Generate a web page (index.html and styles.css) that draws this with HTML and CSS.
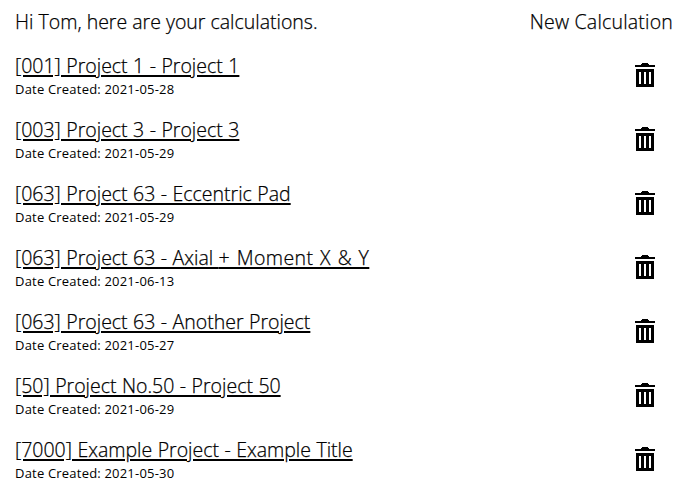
FILE: index.html
```html
<!DOCTYPE html>
<html lang="en">
<head>
  <meta charset="UTF-8">
  <meta name="viewport" content="width=device-width, initial-scale=1.0">
  <title>Calculations</title>
  <link rel="stylesheet" href="styles.css">
</head>
<body>
  <svg class="sprite">
    <symbol id="trash" viewBox="0 0 20 24">
      <path d="M6 2V1h1V0h6v1h1v1h6v2H0V2z"/>
      <path fill-rule="evenodd" d="M1 6h18v18H1zM4 9v12h2V9zM9 9v12h2V9zM14 9v12h2V9z"/>
    </symbol>
  </svg>

  <header class="header">
    <span class="greeting">Hi Tom, here are your calculations.</span>
    <a class="new-calc" href="#">New Calculation</a>
  </header>

  <ul class="calc-list">
    <li class="calc">
      <div class="info">
        <a class="title" href="#">[001] Project 1 - Project 1</a>
        <span class="date">Date Created: 2021-05-28</span>
      </div>
      <button class="delete" aria-label="Delete"><svg><use href="#trash"/></svg></button>
    </li>
    <li class="calc">
      <div class="info">
        <a class="title" href="#">[003] Project 3 - Project 3</a>
        <span class="date">Date Created: 2021-05-29</span>
      </div>
      <button class="delete" aria-label="Delete"><svg><use href="#trash"/></svg></button>
    </li>
    <li class="calc">
      <div class="info">
        <a class="title" href="#">[063] Project 63 - Eccentric Pad</a>
        <span class="date">Date Created: 2021-05-29</span>
      </div>
      <button class="delete" aria-label="Delete"><svg><use href="#trash"/></svg></button>
    </li>
    <li class="calc">
      <div class="info">
        <a class="title" href="#">[063] Project 63 - Axial <span class="wide">+ Moment X &amp; Y</span></a>
        <span class="date">Date Created: 2021-06-13</span>
      </div>
      <button class="delete" aria-label="Delete"><svg><use href="#trash"/></svg></button>
    </li>
    <li class="calc">
      <div class="info">
        <a class="title" href="#">[063] Project 63 - Another Project</a>
        <span class="date">Date Created: 2021-05-27</span>
      </div>
      <button class="delete" aria-label="Delete"><svg><use href="#trash"/></svg></button>
    </li>
    <li class="calc">
      <div class="info">
        <a class="title" href="#">[50] Project No.50 - Project 50</a>
        <span class="date">Date Created: 2021-06-29</span>
      </div>
      <button class="delete" aria-label="Delete"><svg><use href="#trash"/></svg></button>
    </li>
    <li class="calc">
      <div class="info">
        <a class="title" href="#">[7000] Example Project - Example Title</a>
        <span class="date">Date Created: 2021-05-30</span>
      </div>
      <button class="delete" aria-label="Delete"><svg><use href="#trash"/></svg></button>
    </li>
  </ul>
</body>
</html>
```

FILE: styles.css
```css
body {
  margin: 0;
  padding: 8px 19px 0 15px;
  font-family: "Segoe UI", "Open Sans", sans-serif;
  font-weight: 300;
  font-size: 19.5px;
  color: #000;
  background: #fff;
  -webkit-text-stroke: 0.25px #000;
}
a {
  color: inherit;
}
.sprite {
  display: none;
}
.header {
  display: flex;
  justify-content: space-between;
  line-height: 28px;
}
.new-calc {
  letter-spacing: 0.2px;
  text-decoration: none;
}
.calc-list {
  margin: 16px 0 0;
  padding: 0;
  list-style: none;
}
.calc {
  display: flex;
  justify-content: space-between;
  height: 64px;
}
.info {
  display: flex;
  flex-direction: column;
  align-items: flex-start;
}
.title {
  line-height: 28px;
  word-spacing: 0.4px;
  text-decoration-thickness: 2px;
  text-underline-offset: 2px;
}
.wide {
  letter-spacing: 0.4px;
  word-spacing: 1.2px;
}
.date {
  font-size: 13px;
  font-weight: 400;
  letter-spacing: 0.2px;
  line-height: 18px;
  -webkit-text-stroke: 0;
}
.delete {
  width: 20px;
  height: 24px;
  margin: 11px 18px 0 0;
  padding: 0;
  border: none;
  background: none;
  cursor: pointer;
}
.delete svg {
  display: block;
  width: 20px;
  height: 24px;
  stroke: none;
}
```
